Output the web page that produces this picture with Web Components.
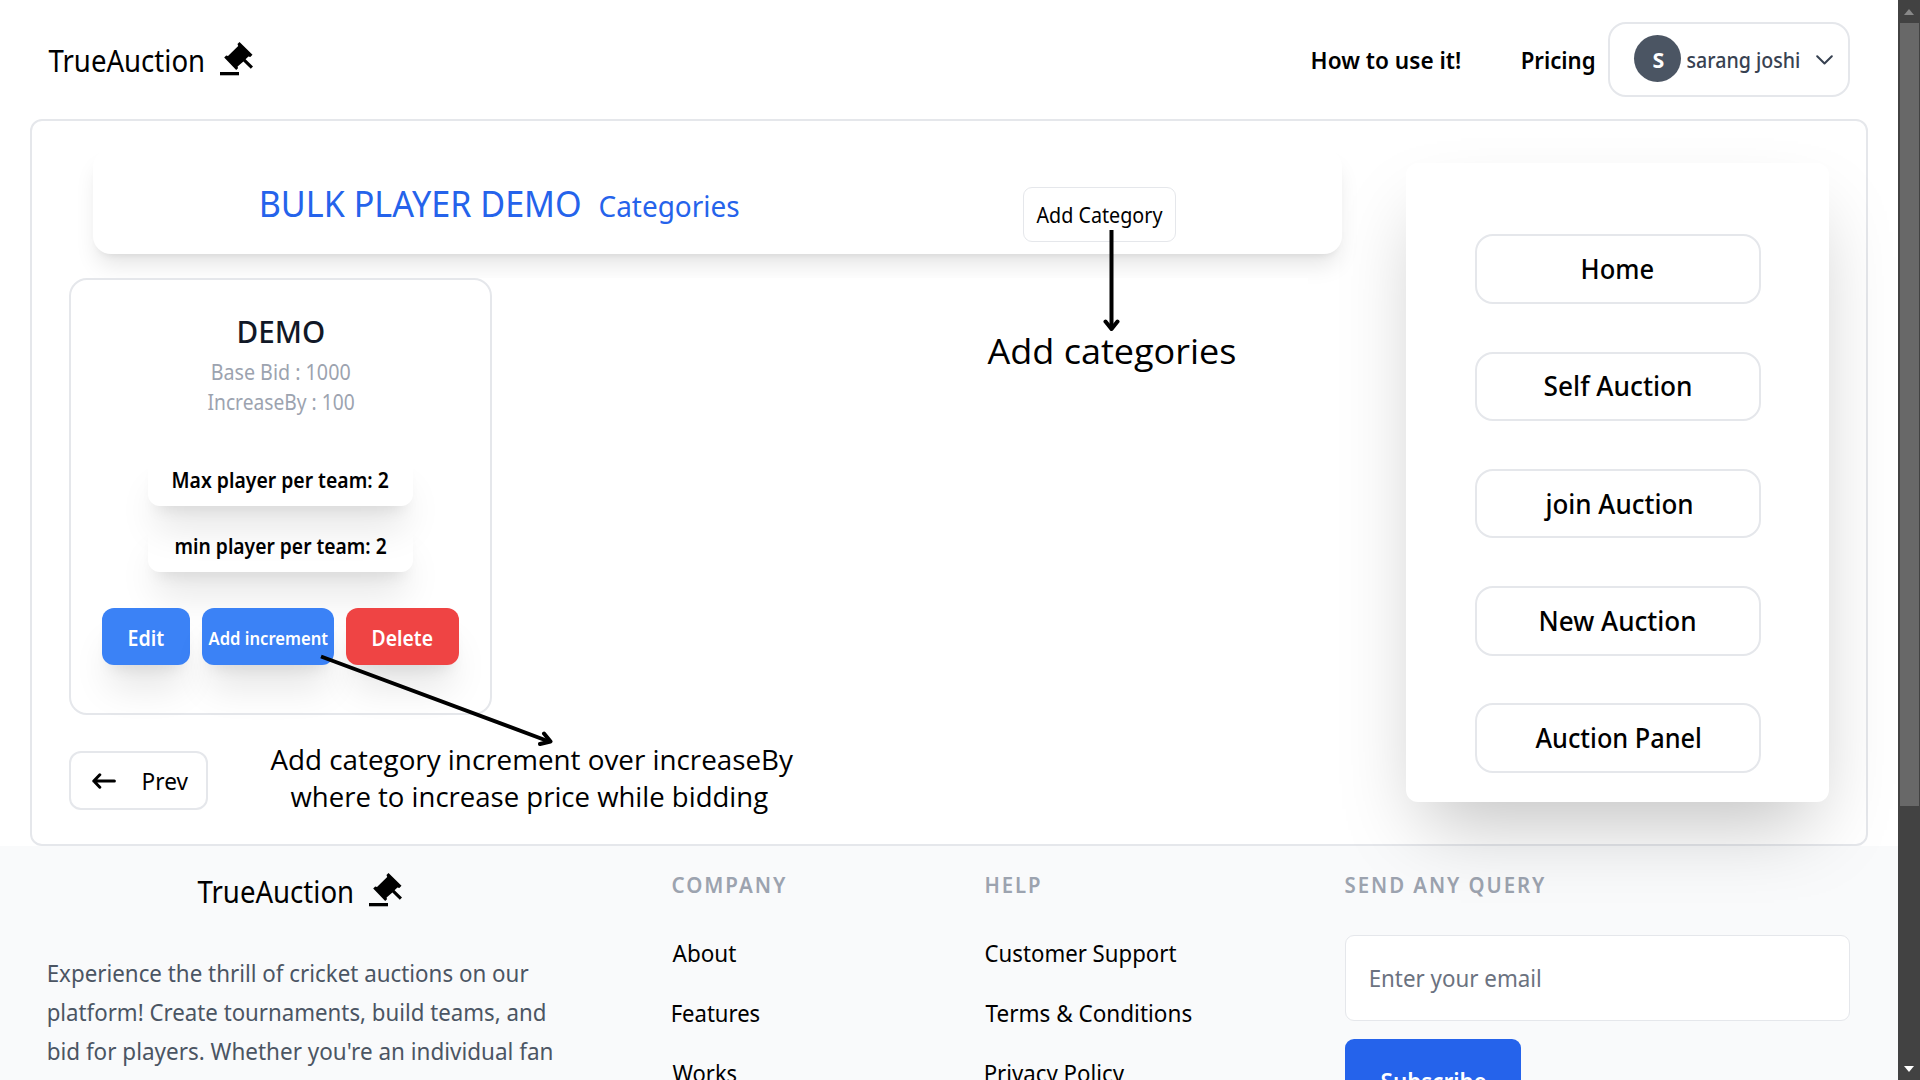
<!DOCTYPE html>
<html lang="en">
<head>
<meta charset="utf-8">
<title>TrueAuction</title>
<style>
html,body{margin:0;padding:0;background:#fff;overflow:hidden;height:1080px;font-family:"Noto Sans","Open Sans",sans-serif;color:#000}
</style>
</head>
<body>
<auction-app></auction-app>
<script>
const define = (name, html, setup) => {
  const template = document.createElement('template');
  template.innerHTML = html;
  customElements.define(name, class extends HTMLElement {
    constructor() {
      super();
      this.attachShadow({mode: 'open'}).append(template.content.cloneNode(true));
    }
    connectedCallback() { if (setup) setup.call(this, this.shadowRoot); }
  });
};

// A single line label. w = visible width, s = font size, l = line height, k = weight, t = tracking.
const canvas = document.createElement('canvas').getContext('2d');
define('ui-text', `<style>
:host{display:block;flex:none;white-space:pre}
span{display:block;width:max-content;transform-origin:0 0}
</style><span><slot></slot></span>`, function (root) {
  const a = (n, d) => this.getAttribute(n) || d;
  const size = a('s', '24'), weight = a('k', '400'), track = a('t', '0') + 'px';
  const family = a('f', 'Noto Sans');
  canvas.letterSpacing = track;
  canvas.font = `${weight} ${size}px "${family}"`;
  canvas.textAlign = 'left';
  const text = this.textContent;
  const m = canvas.measureText(text);
  const ink = m.actualBoundingBoxRight + m.actualBoundingBoxLeft;
  const width = +a('w', ink);
  const scale = (width - 0.8) / ink;
  Object.assign(this.style, {width: width + 'px', fontSize: size + 'px', lineHeight: a('l', '36') + 'px',
    fontWeight: weight, letterSpacing: track, fontFamily: `"${family}","Open Sans",sans-serif`});
  root.querySelector('span').style.transform = `translateX(${m.actualBoundingBoxLeft * scale + 0.5}px) scaleX(${scale})`;
});

define('auction-logo', `<style>
:host{display:flex;align-items:center;gap:16px;height:45px}
svg{width:34px;height:35px;margin-bottom:2px}
ui-text{margin-top:2px}
</style>
<ui-text w="156" s="30" l="45">TrueAuction</ui-text>
<svg viewBox="10 9 34 35"><path d="M29.5 10 42.5 22.8 40.3 24.9 38.4 24.4 35.6 27.2 43 34.6 40.8 36.8 33.4 29.4 27.6 34.4 28 36.2 26.2 38 14.2 25.6 16.2 23.6 18 24 28.2 14 27.5 12Z"/><path d="M10 40h19v3.3H10z"/></svg>`);

define('user-menu', `<style>
:host{display:flex;align-items:center;box-sizing:border-box;width:242px;height:75px;border:2px solid #e5e7eb;border-radius:18px;padding-left:24px;color:#374151}
.avatar{width:47px;height:47px;border-radius:50%;background:#4b5563;color:#fff;display:flex;align-items:center;justify-content:center;margin:0 6px 2px 0}
svg{width:17px;height:10px;margin:1px 0 0 16px}
</style>
<div class="avatar"><ui-text w="12" s="21" l="30" k="700" style="margin-top:2px">S</ui-text></div>
<ui-text w="113" s="21" l="30" k="500">sarang joshi</ui-text>
<svg viewBox="0 0 17 10" fill="none" stroke="#374151" stroke-width="2" stroke-linecap="round" stroke-linejoin="round"><path d="M1.2 1.2 8.5 8.5 15.8 1.2"/></svg>`);

define('app-header', `<style>
:host{display:flex;align-items:center;height:119px;padding:0 48px;width:1802px}
nav{display:flex;align-items:center;margin-left:auto}
</style>
<auction-logo></auction-logo>
<nav><ui-text w="149" k="600" style="margin-right:61px">How to use it!</ui-text><ui-text w="73" k="600" style="margin-right:13px">Pricing</ui-text><user-menu></user-menu></nav>`);

define('title-bar', `<style>
:host{display:flex;align-items:flex-start;box-sizing:border-box;width:1249px;height:105px;border-radius:18px;background:#fff;padding-left:168px;
box-shadow:0 15px 22.5px -4.5px rgba(0,0,0,.1),0 6px 9px -6px rgba(0,0,0,.1)}
.name{display:flex;align-items:baseline;gap:19px;margin-top:31px;color:#2563eb}
.add{display:flex;align-items:center;justify-content:center;box-sizing:border-box;width:153px;height:55px;border:1px solid #e5e7eb;border-radius:9px;margin:38px 0 0 284px}
</style>
<div class="name"><ui-text w="319" s="36" l="48">BULK PLAYER DEMO</ui-text><ui-text w="140" s="29" l="44">Categories</ui-text></div>
<div class="add"><ui-text w="127" s="21" l="30">Add Category</ui-text></div>`);

define('info-chip', `<style>
:host{display:flex;align-items:center;justify-content:center;width:265px;height:52px;border-radius:12px;
box-shadow:0 30px 37.5px -7.5px rgba(0,0,0,.1),0 12px 15px -9px rgba(0,0,0,.1)}
</style><slot></slot>`);

define('action-button', `<style>
:host{display:flex;align-items:center;justify-content:center;box-sizing:border-box;height:57px;padding-top:2px;border-radius:12px;color:#fff;background:#3b82f6;
box-shadow:0 30px 37.5px -7.5px rgba(0,0,0,.1),0 12px 15px -9px rgba(0,0,0,.1)}
:host([danger]){background:#ef4444}
</style><slot></slot>`);

define('category-card', `<style>
:host{display:flex;flex:none;flex-direction:column;align-items:center;box-sizing:border-box;width:423px;height:437px;border:2px solid #e5e7eb;border-radius:18px;padding-top:29px}
.meta{color:#9ca3af;display:flex;flex-direction:column;align-items:center;margin-top:3px}
.chips{display:flex;flex-direction:column;gap:14px;margin-top:37px}
.actions{display:flex;gap:12px;margin-top:36px}
</style>
<ui-text w="86" s="30" l="45" k="500" style="color:#111827">DEMO</ui-text>
<div class="meta"><ui-text w="138" s="21" l="30">Base Bid : 1000</ui-text><ui-text w="147" s="21" l="30">IncreaseBy : 100</ui-text></div>
<div class="chips"><info-chip><ui-text w="217" s="21" l="30" k="600">Max player per team: 2</ui-text></info-chip>
<info-chip><ui-text w="212" s="21" l="30" k="600" style="margin-top:-1px">min player per team: 2</ui-text></info-chip></div>
<div class="actions"><action-button style="width:88px"><ui-text w="36" s="21" l="30" k="600">Edit</ui-text></action-button>
<action-button style="width:132px"><ui-text w="120" s="18" l="28" k="600">Add increment</ui-text></action-button>
<action-button danger style="width:113px"><ui-text w="61" s="21" l="30" k="600">Delete</ui-text></action-button></div>`);

define('prev-button', `<style>
:host{display:flex;flex:none;align-items:center;gap:27px;box-sizing:border-box;width:139px;height:59px;border:2px solid #e5e7eb;border-radius:12px;padding-left:21px}
svg{width:24px;height:16px;margin-top:1px}
ui-text{margin-top:1px}
</style>
<svg viewBox="0 0 24 16" fill="none" stroke="#000" stroke-width="3" stroke-linecap="round" stroke-linejoin="round"><path d="M22.4 8H1.8M7.8 1.8 1.8 8l6 6.2"/></svg>
<ui-text w="46">Prev</ui-text>`);

define('menu-link', `<style>
:host{display:flex;align-items:center;justify-content:center;box-sizing:border-box;width:286px;height:69.5px;border:2px solid #e5e7eb;border-radius:18px}
</style><slot></slot>`);

define('side-panel', `<style>
:host{display:flex;flex-direction:column;align-items:center;gap:47.75px;box-sizing:border-box;width:423px;height:639px;padding-top:71.3px;border-radius:12px;background:#fff;
box-shadow:0 37.5px 75px -18px rgba(0,0,0,.25)}
</style>
<menu-link><ui-text w="72" s="27" l="40" k="500">Home</ui-text></menu-link>
<menu-link><ui-text w="147" s="27" l="40" k="500">Self Auction</ui-text></menu-link>
<menu-link><ui-text w="149" s="27" l="40" k="500">join Auction</ui-text></menu-link>
<menu-link><ui-text w="155" s="27" l="40" k="500">New Auction</ui-text></menu-link>
<menu-link><ui-text w="166" s="27" l="40" k="500">Auction Panel</ui-text></menu-link>`);

define('app-main', `<style>
:host{display:flex;align-items:flex-start;position:relative;z-index:1;box-sizing:border-box;width:1838px;height:727px;margin-left:30px;border:2px solid #e5e7eb;border-radius:12px}
.left{width:1374px;padding-top:28px}
title-bar{margin-left:61px}
.list{margin:24px 0 0 37px;width:1239px;height:533px;background:#fff;display:flex;flex-direction:column;gap:36px}
side-panel{margin-top:42px}
</style>
<div class="left"><title-bar></title-bar><div class="list"><category-card></category-card><prev-button></prev-button></div></div>
<side-panel></side-panel>`);

define('link-list', `<style>
:host{display:flex;flex-direction:column;gap:24px;padding-top:24.4px}
::slotted([slot=head]){color:#9ca3af;margin-bottom:10.8px}
</style><slot name="head"></slot><slot></slot>`);

define('query-form', `<style>
:host{display:flex;flex-direction:column;padding-top:24.4px}
.input{display:flex;align-items:center;box-sizing:border-box;width:505px;height:86px;border:1px solid #e5e7eb;border-radius:9px;background:#fff;color:#6b7280;padding-left:24px;margin:34.6px 0 18px}
.send{display:flex;align-items:center;justify-content:center;width:176px;height:84px;border-radius:9px;background:#2563eb;color:#fff}
</style>
<ui-text w="200" s="21" l="30" k="600" t="2" style="color:#9ca3af">SEND ANY QUERY</ui-text>
<div class="input"><ui-text w="171">Enter your email</ui-text></div>
<div class="send"><ui-text w="105" k="600">Subscribe</ui-text></div>`);

define('app-footer', `<style>
:host{display:flex;align-items:flex-start;box-sizing:border-box;height:234px;width:1898px;background:#f9fafb;padding-left:48px;overflow:hidden}
.about{width:624px;padding-top:22.4px}
auction-logo{margin-left:149px}
.copy{margin-top:39.5px;color:#4b5563}
.company{width:313px}.help{width:360px}
</style>
<div class="about"><auction-logo></auction-logo>
<div class="copy"><ui-text w="481" l="39">Experience the thrill of cricket auctions on our</ui-text><ui-text w="497" l="39">platform! Create tournaments, build teams, and</ui-text><ui-text w="504" l="39">bid for players. Whether you're an individual fan</ui-text></div></div>
<link-list class="company"><ui-text slot="head" w="114" s="21" l="30" k="600" t="2">COMPANY</ui-text><ui-text w="65">About</ui-text><ui-text w="88">Features</ui-text><ui-text w="65">Works</ui-text></link-list>
<link-list class="help"><ui-text slot="head" w="55" s="21" l="30" k="600" t="2">HELP</ui-text><ui-text w="192">Customer Support</ui-text><ui-text w="207">Terms &amp; Conditions</ui-text><ui-text w="140">Privacy Policy</ui-text></link-list>
<query-form></query-form>`);

define('scroll-bar', `<style>
:host{display:flex;flex-direction:column;align-items:center;box-sizing:border-box;width:22px;height:1080px;background:#424242;position:relative;z-index:2}
.up,.down{width:0;height:0;border:5.5px solid transparent}
.up{border-top:0;border-bottom:6px solid #888;margin:9px 0 8px}
.down{border-bottom:0;border-top:6px solid #fff;margin:auto 0 8px}
.thumb{width:19px;height:783px;background:#686868}
</style><div class="up"></div><div class="thumb"></div><div class="down"></div>`);

// Callouts drawn over the page: two arrows with their captions.
define('page-notes', `<style>
:host{position:absolute;left:0;top:0;width:1898px;height:1080px;z-index:3;pointer-events:none}
svg{position:absolute;left:0;top:0}
ui-text{position:absolute}
</style>
<svg width="1898" height="1080" fill="none" stroke="#000" stroke-width="4" stroke-linejoin="round"><path d="M1111.5 230v98M321 656.500 549 741.500"/><path stroke-linecap="round" d="M1105.5 321.500l6 7.500 6-7.500M544 733.500l6.500 8-10.500 2.500"/></svg>
<ui-text f="Open Sans" w="249" s="35" l="50" style="left:986.500px;top:326px">Add categories</ui-text>
<ui-text f="Open Sans" w="524" s="26.500" l="36" style="left:270px;top:742px">Add category increment over increaseBy</ui-text>
<ui-text f="Open Sans" w="478" s="26.500" l="36" style="left:289.500px;top:779px">where to increase price while bidding</ui-text>`);

define('auction-app', `<style>
:host{display:flex;width:1920px;height:1080px;overflow:hidden;position:relative}
.page{width:1898px}
</style>
<div class="page"><app-header></app-header><app-main></app-main><app-footer></app-footer></div><scroll-bar></scroll-bar><page-notes></page-notes>`);
</script>
</body>
</html>
